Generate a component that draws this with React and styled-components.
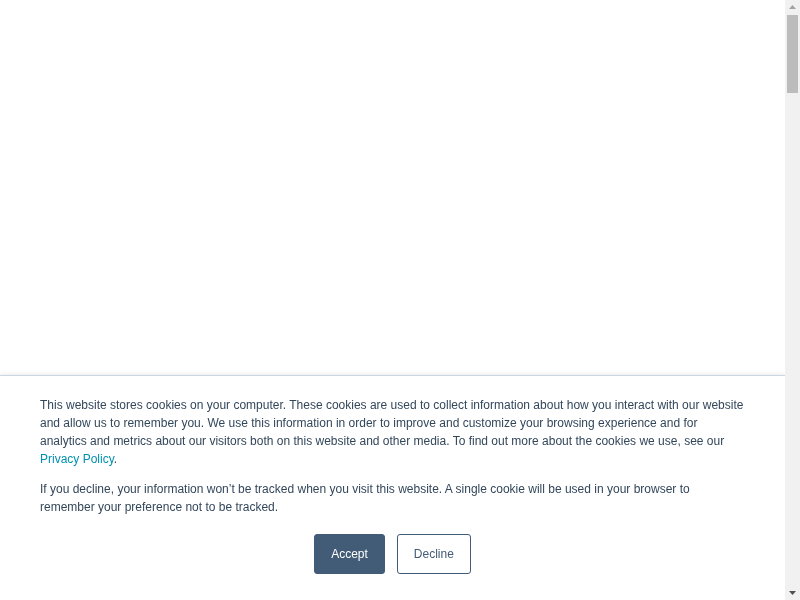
import React from "react";
import styled, { createGlobalStyle } from "styled-components";

const Global = createGlobalStyle`
  html, body { margin: 0; padding: 0; background: #ffffff; }
  body { font-family: "Liberation Sans", Arial, sans-serif; }
`;

const Page = styled.div`
  height: 4380px;
  background: #ffffff;
`;

const Scrollbar = styled.div`
  position: fixed;
  top: 0;
  right: 0;
  bottom: 0;
  width: 15px;
  background: #f1f1f1;
  display: flex;
  flex-direction: column;
  align-items: center;
`;

const Arrow = styled.div`
  height: 14px;
  width: 15px;
  display: flex;
  align-items: center;
  justify-content: center;
`;

const Track = styled.div`
  flex: 1;
  width: 100%;
  display: flex;
  justify-content: center;
`;

const Thumb = styled.div`
  width: 11px;
  height: 78px;
  margin-top: 1px;
  background: #bcbcbc;
`;

const Banner = styled.div`
  position: fixed;
  left: 0;
  right: 15px;
  bottom: 0;
  background: #ffffff;
  border-top: 1px solid #cbd6e2;
  box-shadow: 0 -1px 5px rgba(0, 0, 0, 0.08);
  padding: 20px 40px 26px;
  font-family: "Liberation Sans", Arial, sans-serif;
  font-size: 12px;
  line-height: 18px;
  color: #33475b;
`;

const Para = styled.p`
  margin: 0 0 ${(p) => (p.$last ? "0" : "12px")};
`;

const Link = styled.a`
  color: #0091ae;
  text-decoration: none;
`;

const Actions = styled.div`
  display: flex;
  justify-content: center;
  gap: 12px;
  margin-top: 18px;
`;

const Button = styled.button`
  height: 40px;
  padding: 0 16px;
  border-radius: 3px;
  border: 1px solid #425b76;
  background: ${(p) => (p.$primary ? "#425b76" : "#ffffff")};
  color: ${(p) => (p.$primary ? "#ffffff" : "#425b76")};
  font-family: "Liberation Sans", Arial, sans-serif;
  font-size: 12px;
  cursor: pointer;
`;

const Tri = ({ down }) => (
  <svg width="7" height="4" viewBox="0 0 7 4">
    <path
      d={down ? "M0 0 H7 L3.5 4 Z" : "M0 4 H7 L3.5 0 Z"}
      fill={down ? "#505050" : "#a3a3a3"}
    />
  </svg>
);

export default function App() {
  return (
    <>
      <Global />
      <Page />
      <Banner>
        <Para>
          This website stores cookies on your computer. These cookies are used to collect information about how you interact with our website and allow us to remember you. We use this information in order to improve and customize your browsing experience and for analytics and metrics about our visitors both on this website and other media. To find out more about the cookies we use, see our{" "}
          <Link href="#">Privacy Policy</Link>.
        </Para>
        <Para $last>
          If you decline, your information won’t be tracked when you visit this website. A single cookie will be used in your browser to remember your preference not to be tracked.
        </Para>
        <Actions>
          <Button $primary>Accept</Button>
          <Button>Decline</Button>
        </Actions>
      </Banner>
      <Scrollbar>
        <Arrow><Tri /></Arrow>
        <Track><Thumb /></Track>
        <Arrow><Tri down /></Arrow>
      </Scrollbar>
    </>
  );
}
